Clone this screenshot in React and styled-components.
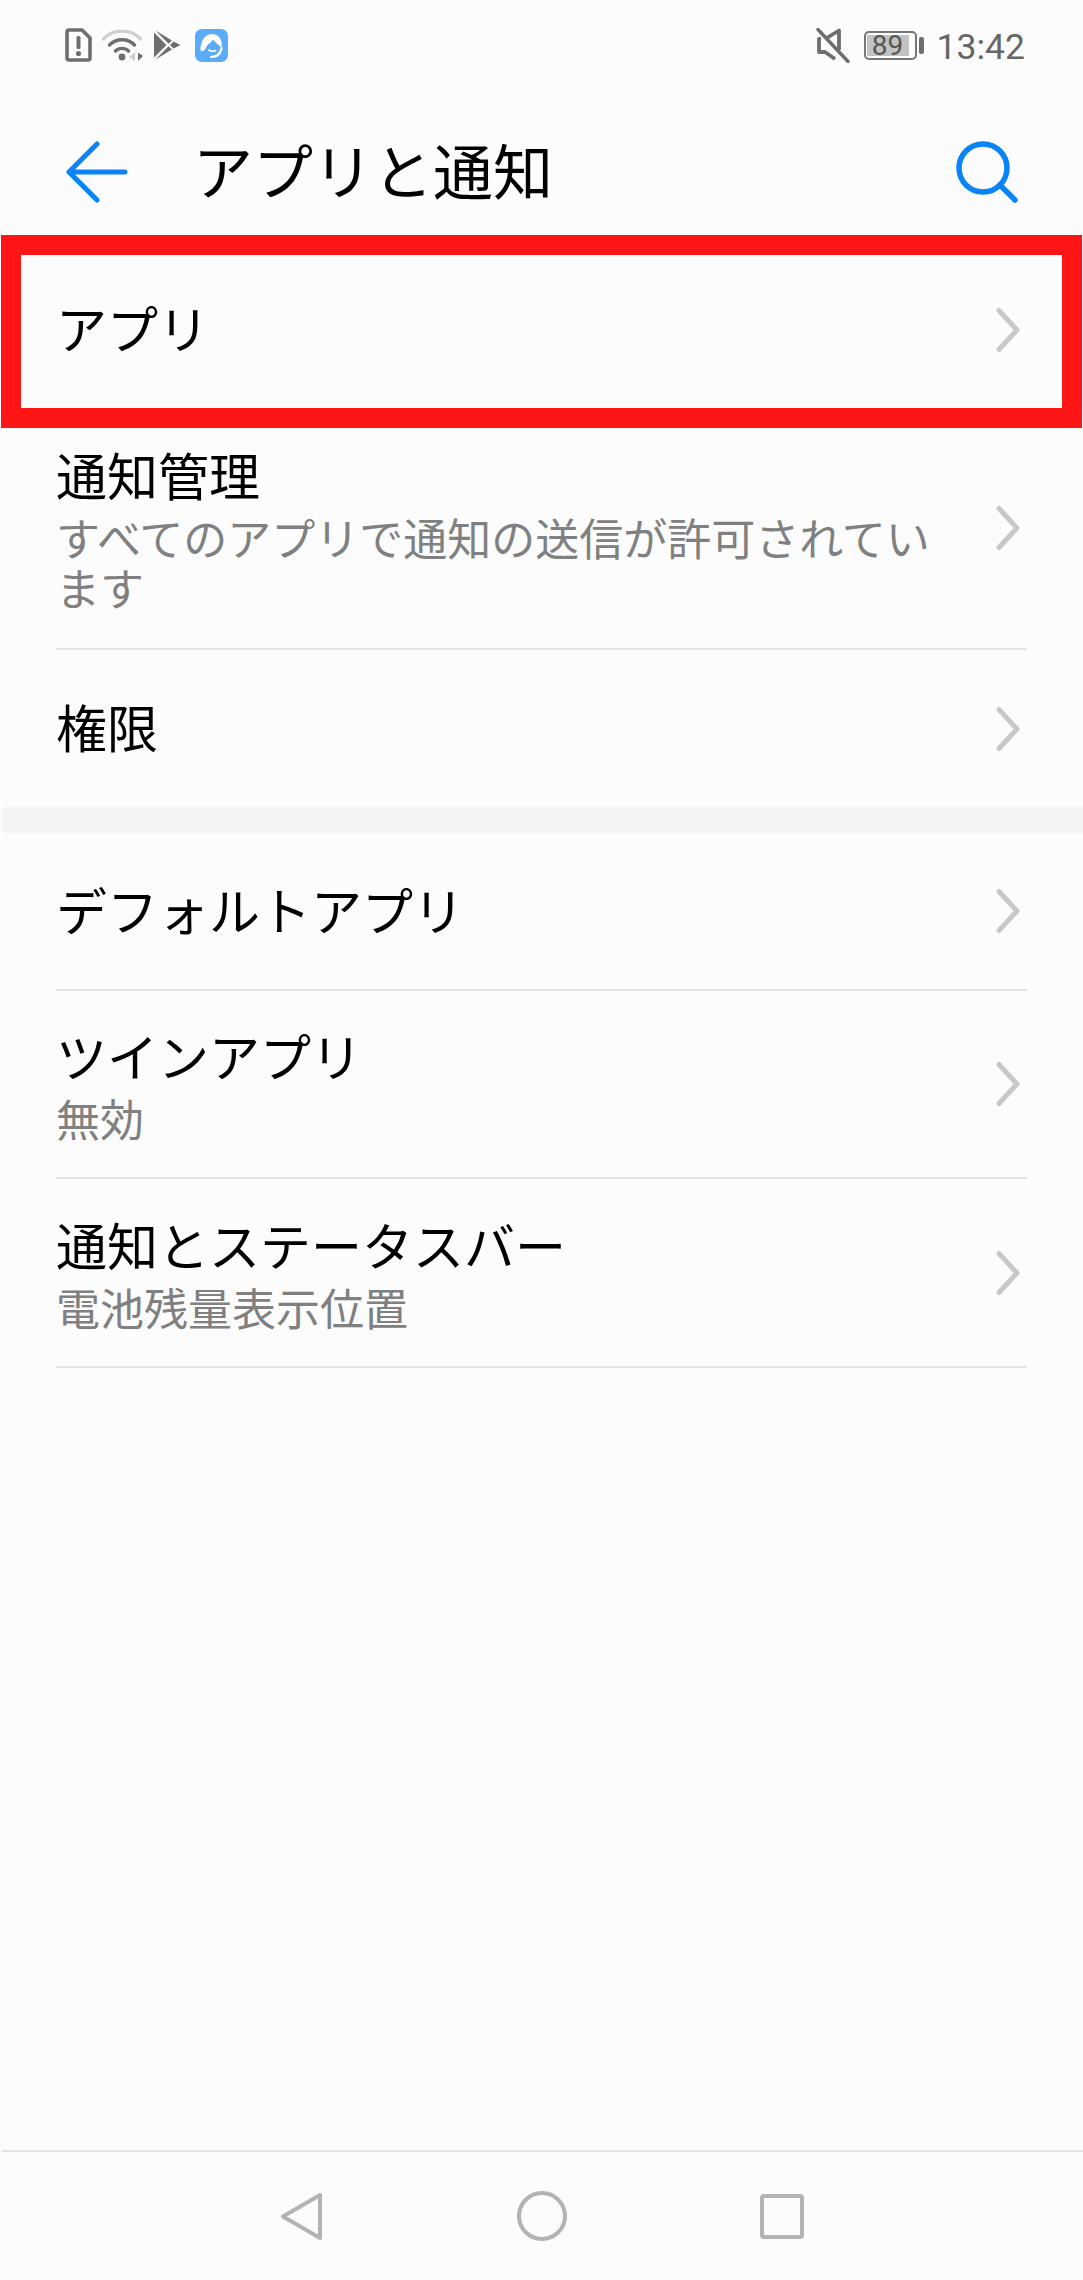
import React from 'react';
import styled, { createGlobalStyle } from 'styled-components';

const GlobalStyle = createGlobalStyle`
  html, body {
    margin: 0;
    padding: 0;
    background: #fcfcfc;
  }
  * {
    box-sizing: border-box;
  }
`;

const Page = styled.div`
  width: 1083px;
  height: 2280px;
  display: flex;
  flex-direction: column;
  background: #fcfcfc;
  color: #000;
  font-family: 'Noto Sans CJK JP', 'Noto Sans', sans-serif;
  overflow: hidden;
`;

const StatusBar = styled.div`
  height: 92px;
  flex: none;
  padding: 26px 58px 0 65px;
  display: flex;
  justify-content: space-between;
  align-items: flex-start;
`;

const StatusGroup = styled.div`
  display: flex;
  align-items: center;
  height: 38px;
  gap: ${(p) => p.$gap}px;
`;

const Time = styled.span`
  font-family: Roboto, 'Liberation Sans', sans-serif;
  font-size: 35.5px;
  line-height: 38px;
  padding-top: 3px;
  color: #666;
`;

const Battery = styled.div`
  width: 53px;
  height: 29px;
  border: 2px solid #777;
  border-radius: 5px;
  padding: 2px 6px 2px 1px;
  position: relative;
  margin-right: 6px;
  display: flex;

  &::after {
    content: '';
    position: absolute;
    right: -9px;
    top: 4px;
    width: 5px;
    height: 17px;
    border-radius: 2px;
    background: #6e6e6e;
  }
`;

const BatteryLevel = styled.div`
  width: 42px;
  background: #c2c2c2;
  color: #555;
  font-family: Roboto, 'Liberation Sans', sans-serif;
  font-size: 28px;
  line-height: 21px;
  text-align: center;
`;

const Header = styled.header`
  height: 143px;
  flex: none;
  padding: 16px 65px 0 66px;
  display: flex;
  align-items: center;
  justify-content: space-between;
`;

const Title = styled.h1`
  flex: 1;
  margin: 0 0 6px 65px;
  font-size: 60px;
  font-weight: 400;
  line-height: 80px;
`;

const Row = styled.div`
  flex: none;
  height: ${(p) => p.$h}px;
  margin: 0 1px;
  padding: 0 ${(p) => (p.$marked ? 35 : 55)}px;
  display: flex;
  border: ${(p) => (p.$marked ? '20px solid #fe1616' : 'none')};
`;

const RowInner = styled.div`
  flex: 1;
  display: flex;
  align-items: center;
  justify-content: space-between;
  border-bottom: ${(p) => (p.$line ? '2px solid #e3e3e3' : 'none')};
  padding-right: 7px;
  padding-bottom: ${(p) => p.$lift}px;
`;

const RowText = styled.div`
  width: 885px;
  padding-bottom: ${(p) => (p.$twoLine ? 8 : 5)}px;
`;

const RowTitle = styled.div`
  font-size: 51px;
  line-height: 76px;
`;

const RowSub = styled.div`
  font-size: 44px;
  line-height: 50px;
  color: #808080;
`;

const Band = styled.div`
  flex: none;
  height: 26px;
  margin-left: 2px;
  background: #f4f4f4;
`;

const Spacer = styled.div`
  flex: 1;
`;

const NavBar = styled.nav`
  height: 130px;
  flex: none;
  border-top: 2px solid #e3e3e3;
  margin-left: 2px;
  padding: 0 279px 0 278px;
  display: flex;
  justify-content: space-between;
  align-items: center;
`;

const AppBadge = styled.svg`
  margin-left: 4px;
`;

const Chevron = () => (
  <svg width="24" height="46" viewBox="0 0 24 46" fill="none">
    <path d="M3 3.5 L21 23 L3 42.5" stroke="#c8c8c8" strokeWidth="5" strokeLinecap="round" strokeLinejoin="round" />
  </svg>
);

const SimIcon = () => (
  <svg width="27" height="34" viewBox="0 0 27 34">
    <path d="M4 2 H17 L25 10 V30 a2 2 0 0 1 -2 2 H4 a2 2 0 0 1 -2 -2 V4 a2 2 0 0 1 2 -2 Z" fill="none" stroke="#6e6e6e" strokeWidth="3.6" />
    <rect x="11.5" y="8" width="4" height="13" rx="1.5" fill="#6e6e6e" />
    <circle cx="13.5" cy="25.5" r="2.6" fill="#6e6e6e" />
  </svg>
);

const WifiIcon = () => (
  <svg width="41" height="34" viewBox="0 0 41 34" fill="none">
    <path d="M1.5 11 C11 0.5 29 0.5 38.5 11" stroke="#cfcfcf" strokeWidth="3.4" strokeLinecap="round" />
    <path d="M7.5 17 C14 10 26 10 32.5 17" stroke="#6e6e6e" strokeWidth="3.4" strokeLinecap="round" />
    <path d="M13.5 23 C17 19.5 23 19.5 26.5 23" stroke="#6e6e6e" strokeWidth="3.4" strokeLinecap="round" />
    <circle cx="20" cy="29" r="3.4" fill="#6e6e6e" />
    <path d="M33 24.5 V33 L27 29 Z" fill="#cfcfcf" />
    <path d="M36 24.5 V33 L41 28 Z" fill="#6e6e6e" />
  </svg>
);

const PlayIcon = () => (
  <svg width="28" height="30" viewBox="0 0 28 30">
    <path d="M1 2.5 L13.5 15 L1 27.5 Z" fill="#6e6e6e" />
    <path d="M2.5 0.5 L19 10.5 L15.5 13.8 Z" fill="#6e6e6e" />
    <path d="M20.5 11.5 L27.5 15 L20.5 18.5 L17 15 Z" fill="#6e6e6e" />
    <path d="M2.5 29.5 L19 19.5 L15.5 16.2 Z" fill="#6e6e6e" />
  </svg>
);

const SupportIcon = () => (
  <AppBadge width="33" height="33" viewBox="0 0 33 33">
    <rect width="33" height="33" rx="7" fill="#5cabf8" />
    <path d="M6.5 20 C5 11 11 5 17 5 C23.5 5 28 11 26.5 19 C24 15.5 20.5 14 18 10.5 C16.5 14 11.5 15 10.5 20 Z" fill="#fff" />
    <rect x="5.5" y="16" width="4" height="6" rx="1.5" fill="#fff" />
    <path d="M14 21 C16 22.5 18.5 22.5 20.5 21.5" fill="none" stroke="#fff" strokeWidth="1.6" strokeLinecap="round" />
    <path d="M16 28 C21 28 25.5 25.5 26.5 19" fill="none" stroke="#fff" strokeWidth="2.2" strokeLinecap="round" />
  </AppBadge>
);

const MuteIcon = () => (
  <svg width="34" height="35" viewBox="0 0 34 35" fill="none">
    <path d="M5 11 H3 V24 H9 L19 31 M9 11 L23 2.5 V22" stroke="#6e6e6e" strokeWidth="3.8" strokeLinejoin="round" />
    <path d="M2 1.5 L32 33.5" stroke="#6e6e6e" strokeWidth="3.4" strokeLinecap="round" />
  </svg>
);

const BackIcon = () => (
  <svg width="62" height="62" viewBox="0 0 62 62" fill="none">
    <path d="M31 3 L3 31 L31 59 M3 31 H59" stroke="#0a84f5" strokeWidth="5" strokeLinecap="round" strokeLinejoin="round" />
  </svg>
);

const SearchIcon = () => (
  <svg width="62" height="62" viewBox="0 0 62 62" fill="none">
    <circle cx="27" cy="27" r="24" stroke="#0a84f5" strokeWidth="5.5" />
    <path d="M44 44 L59 59" stroke="#0a84f5" strokeWidth="5.5" strokeLinecap="round" />
  </svg>
);

const NavBack = () => (
  <svg width="43" height="49" viewBox="0 0 43 49" fill="none">
    <path d="M40 3 L3 24.5 L40 46 Z" stroke="#b3b3b3" strokeWidth="4" strokeLinejoin="round" />
  </svg>
);

const NavHome = () => (
  <svg width="50" height="50" viewBox="0 0 50 50" fill="none">
    <circle cx="25" cy="25" r="23" stroke="#b3b3b3" strokeWidth="4" />
  </svg>
);

const NavRecent = () => (
  <svg width="44" height="45" viewBox="0 0 44 45" fill="none">
    <rect x="2" y="2" width="40" height="41" rx="2" stroke="#b3b3b3" strokeWidth="4" />
  </svg>
);

const Item = ({ title, sub, line, marked, h, lift = 0 }) => (
  <Row $h={h} $marked={marked}>
    <RowInner $line={line} $lift={lift}>
      <RowText $twoLine={!!sub}>
        <RowTitle>{title}</RowTitle>
        {sub && <RowSub>{sub}</RowSub>}
      </RowText>
      <Chevron />
    </RowInner>
  </Row>
);

const App = () => (
  <Page>
    <GlobalStyle />
    <StatusBar>
      <StatusGroup $gap={10}>
        <SimIcon />
        <WifiIcon />
        <PlayIcon />
        <SupportIcon />
      </StatusGroup>
      <StatusGroup $gap={14}>
        <MuteIcon />
        <Battery>
          <BatteryLevel>89</BatteryLevel>
        </Battery>
        <Time>13:42</Time>
      </StatusGroup>
    </StatusBar>
    <Header>
      <BackIcon />
      <Title>アプリと通知</Title>
      <SearchIcon />
    </Header>
    <Item marked h={193} lift={4} title="アプリ" />
    <Item h={222} line lift={20} title="通知管理" sub="すべてのアプリで通知の送信が許可されています" />
    <Item h={157} title="権限" />
    <Band />
    <Item h={158} line title="デフォルトアプリ" />
    <Item h={188} line title="ツインアプリ" sub="無効" />
    <Item h={189} line title="通知とステータスバー" sub="電池残量表示位置" />
    <Spacer />
    <NavBar>
      <NavBack />
      <NavHome />
      <NavRecent />
    </NavBar>
  </Page>
);

export default App;
